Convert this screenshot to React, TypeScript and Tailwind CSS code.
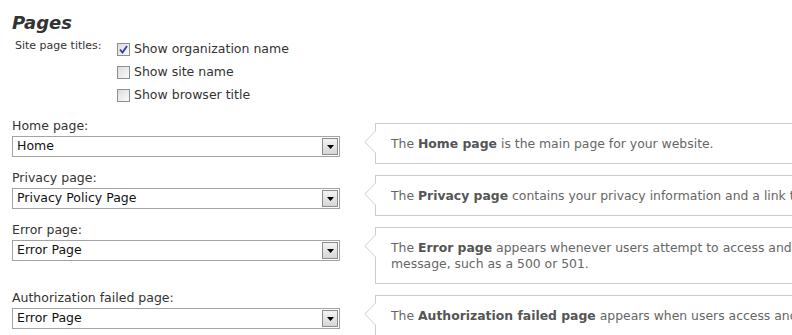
import React from 'react';

const HELP = [
  { label: 'Home page:', value: 'Home', bold: 'Home page', rest: ' is the main page for your website.' },
  {
    label: 'Privacy page:',
    value: 'Privacy Policy Page',
    bold: 'Privacy page',
    rest: ' contains your privacy information and a link to your terms of use.',
  },
  {
    label: 'Error page:',
    value: 'Error Page',
    bold: 'Error page',
    rest: ' appears whenever users attempt to access and the server returns an error message, such as a 500 or 501.',
  },
  {
    label: 'Authorization failed page:',
    value: 'Error Page',
    bold: 'Authorization failed page',
    rest: " appears when users access another user's page.",
  },
];

const TITLES = [
  { name: 'Show organization name', checked: true },
  { name: 'Show site name', checked: false },
  { name: 'Show browser title', checked: false },
];

const Checkbox = ({ checked }: { checked: boolean }) => (
  <span className="relative box-border flex h-[13px] w-[13px] items-center justify-center border border-[#8e8f8f] bg-gradient-to-br from-[#dcdcdc] to-[#fbfbfb]">
    {checked && (
      <svg width="9" height="9" viewBox="0 0 9 9">
        <path d="M1 4.5 L3.5 7.5 L8 1" fill="none" stroke="#2d3ea8" strokeWidth="1.8" />
      </svg>
    )}
  </span>
);

const Select = ({ value }: { value: string }) => (
  <div className="flex h-[21px] w-[328px] items-center justify-between border border-[#a3a3a3] bg-white pl-[4px] pr-[1px]">
    <span className="text-[12.5px] leading-none text-[#111]">{value}</span>
    <span className="flex h-[17px] w-[16px] items-center justify-center border border-[#8c8c8c] bg-gradient-to-b from-[#f4f4f4] to-[#d6d6d6]">
      <svg width="7" height="4" viewBox="0 0 7 4">
        <path d="M0 0 H7 L3.5 4 Z" fill="#000" />
      </svg>
    </span>
  </div>
);

const App = () => {
  return (
    <div className="h-[335px] w-full overflow-hidden bg-white font-['DejaVu_Sans',Verdana,sans-serif] text-[#333]">
      <h1 className="pl-[12px] pt-[11px] text-[18px] font-bold italic leading-[24px] text-[#333]">Pages</h1>
      <div className="flex pt-[3px]">
        <div className="w-[117px] pl-[15px] pt-[1px] text-[11px] leading-[14px] text-[#333]">Site page titles:</div>
        <div className="flex flex-col">
          {TITLES.map((t) => (
            <label key={t.name} className="flex h-[23px] items-center gap-[4px] text-[12.5px] text-[#333]">
              <Checkbox checked={t.checked} />
              <span>{t.name}</span>
            </label>
          ))}
        </div>
      </div>
      <div className="flex flex-col gap-[6px] pt-[11px]">
        {HELP.map((h) => (
          <div key={h.label} className="flex items-start">
            <div className="flex w-[363px] shrink-0 flex-col gap-[2px] pl-[12px]">
              <span className="text-[12.5px] leading-[16px] text-[#333]">{h.label}</span>
              <Select value={h.value} />
            </div>
            <div className="relative ml-[12px] mt-[5px] w-[660px] shrink-0 border border-[#cccccc] bg-white pt-[12px] pb-[11px] pl-[15px] pr-[10px] text-[12.4px] leading-[16px] text-[#666]">
              <svg className="absolute left-[-12px] top-[6px]" width="12" height="24" viewBox="0 0 12 24">
                <polygon points="12,0.5 0.8,12 12,23.5" fill="#fff" />
                <polyline points="12,0.5 0.8,12 12,23.5" fill="none" stroke="#cccccc" strokeWidth="1" />
              </svg>
              The <b className="font-bold text-[#555]">{h.bold}</b>
              {h.rest}
            </div>
          </div>
        ))}
      </div>
    </div>
  );
};

export default App;
